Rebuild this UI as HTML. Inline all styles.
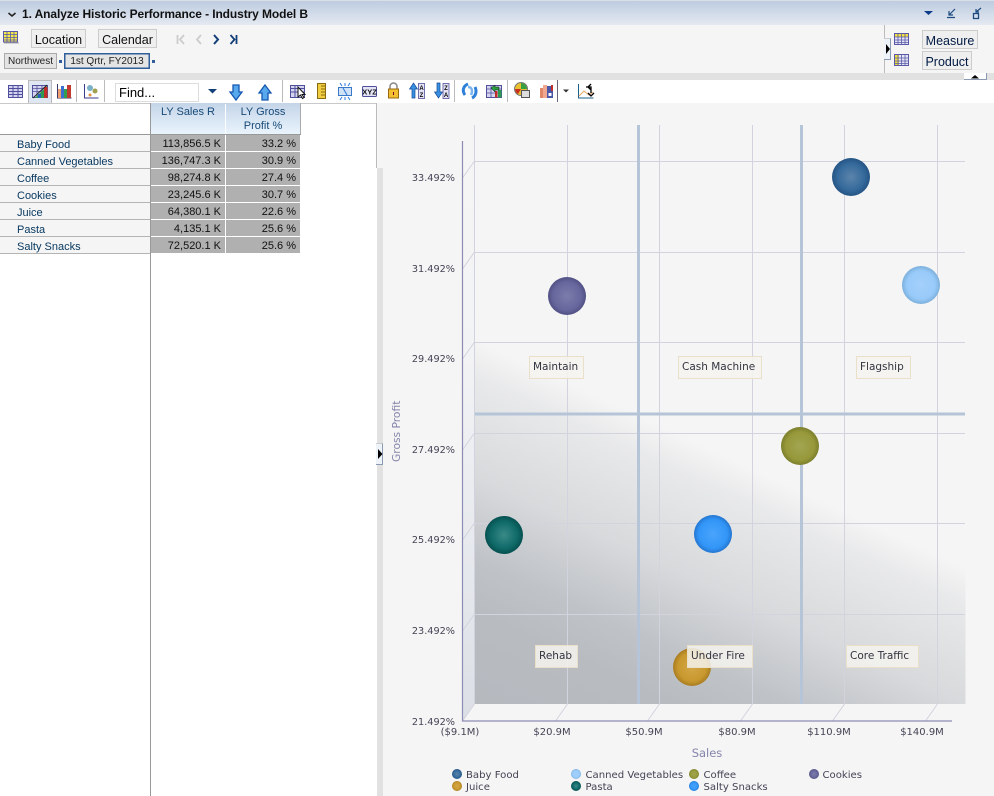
<!DOCTYPE html>
<html><head><meta charset="utf-8">
<style>
html,body{margin:0;padding:0;background:#fff}
#p{position:relative;width:994px;height:796px;overflow:hidden;background:#fff;font-family:"Liberation Sans",sans-serif;font-size:12px;color:#000}
#p div{position:absolute;box-sizing:border-box}
.btn{background:#efefef;border:1px solid #ccc;font-size:12.5px;line-height:20px;height:19px;text-align:center;color:#111}
.crumb{font-size:10px;height:16px;line-height:15px;text-align:center;background:#e4e4e4;color:#222}
.rh{left:0;width:150px;height:17px;background:#f5f5f5;border-bottom:1px solid #b4b4b4;font-size:11px;line-height:20px;padding-left:17px;color:#0a3a62}
.v{height:16px;background:#b0b0b0;font-size:11px;line-height:18px;text-align:right;padding-right:4px;color:#111}
.h{top:103px;height:31px;background:linear-gradient(#c4d4e8,#e9f3fc);font-size:11px;text-align:center;color:#174a78;line-height:14px;padding-top:2px}
svg{position:absolute;overflow:visible}
</style></head><body><div id="p">

<div style="left:0;top:0;width:994px;height:25px;background:linear-gradient(#bccbdf,#e4e9f1)"></div>
<div style="left:0;top:0;width:994px;height:1px;background:#d8dfe9"></div>
<div style="left:22px;top:7px;font-weight:bold;font-size:12px;line-height:15px;letter-spacing:-.1px;color:#111;white-space:nowrap">1. Analyze Historic Performance - Industry Model B</div>
<svg style="left:0;top:0" width="994" height="25"><path d="M8.500 13l3.500 3 3.500-3" fill="none" stroke="#222" stroke-width="1.600"/><path d="M924 11h9l-4.500 4z" fill="#0d3c8a"/><path d="M955 9l-6 6M949 11v4h4M947 17.500h8" fill="none" stroke="#1d4a80" stroke-width="1.200"/><path d="M981 8l-5 4M976 9v3h3" fill="none" stroke="#1d4a80" stroke-width="1.200"/><rect x="973.500" y="13.500" width="5" height="5" fill="none" stroke="#1d4a80" stroke-width="1.300"/></svg>

<div style="left:0;top:25px;width:994px;height:48px;background:#f5f5f5"></div>
<div style="left:0;top:73px;width:994px;height:7px;background:#e1e1e1"></div>
<svg style="left:3px;top:31px" width="16" height="14"><rect x=".5" y=".5" width="14" height="10.500" fill="#f4e94a" stroke="#5a5aa8"/><path d="M.5 3.500h14M.5 6.500h14M.5 9h14M4 .5v11M7.500 .5v11M11 .5v11" stroke="#5a5aa8" stroke-width=".8"/><path d="M1 12h15" stroke="#aaa"/></svg>
<div class="btn" style="left:31px;top:29px;width:55px">Location</div>
<div class="btn" style="left:98px;top:29px;width:59px">Calendar</div>
<svg style="left:170px;top:30px" width="75" height="20"><path d="M7.500 5v9M14 5l-4 4.500 4 4.500" fill="none" stroke="#ccc" stroke-width="1.800"/><path d="M31 5l-4 4.500 4 4.500" fill="none" stroke="#ccc" stroke-width="1.800"/><path d="M44 5l4 4.500-4 4.500" fill="none" stroke="#123f78" stroke-width="2"/><path d="M60.500 5l4 4.500-4 4.500M66.500 5v9" fill="none" stroke="#123f78" stroke-width="1.800"/></svg>
<div class="crumb" style="left:4px;top:53px;width:53px;border:1px solid #aaa">Northwest</div>
<div style="left:59px;top:60px;width:3px;height:3px;background:#2f5e9a"></div>
<div class="crumb" style="left:64px;top:53px;width:86px;height:16px;border:1px solid #2f5e9a;box-shadow:inset 0 0 0 .5px #2f5e9a">1st Qrtr, FY2013</div>
<div style="left:152px;top:60px;width:3px;height:3px;background:#2f5e9a"></div>

<div style="left:884px;top:25px;width:1px;height:48px;background:#bbb"></div>
<div style="left:884px;top:38px;width:7px;height:22px;background:#eef3fa;border-right:1px solid #8a9ab0;border-bottom:1px solid #8a9ab0;border-top:1px solid #ccc"></div>
<svg style="left:886px;top:44px" width="6" height="10"><path d="M0 0l4 5-4 5z" fill="#000"/></svg>
<svg style="left:894px;top:33px" width="17" height="14"><rect x=".5" y=".5" width="14" height="11" fill="#e4e4f6" stroke="#5a5aa8"/><rect x="1" y="1" width="13" height="3" fill="#f0e040"/><path d="M.5 4h14M.5 7h14M.5 9.500h14M4 .5v11M7.500 .5v11M11 .5v11" stroke="#5a5aa8" stroke-width=".8"/></svg>
<svg style="left:894px;top:54px" width="17" height="14"><rect x=".5" y=".5" width="14" height="11" fill="#e4e4f6" stroke="#5a5aa8"/><rect x="1" y="1" width="4" height="10" fill="#f0e040"/><path d="M.5 4h14M.5 7h14M.5 9.500h14M4 .5v11M7.500 .5v11M11 .5v11" stroke="#5a5aa8" stroke-width=".8"/></svg>
<div class="btn" style="left:922px;top:30px;width:56px;color:#001a44">Measure</div>
<div class="btn" style="left:922px;top:51px;width:50px;color:#001a44">Product</div>
<div style="left:964px;top:73px;width:23px;height:7px;background:#fff;border-right:1px solid #8a9ab0;border-bottom:1px solid #8a9ab0"></div>
<svg style="left:971px;top:75px" width="10" height="4"><path d="M0 3.500h8L4 0z" fill="#000"/></svg>

<div style="left:0;top:80px;width:994px;height:23px;background:#fff"></div>
<div style="left:28px;top:80px;width:24px;height:23px;background:#dfe8f2;border-left:1px solid #bbb;border-right:1px solid #bbb;border-top:1px solid #bbb"></div>

<svg style="left:0;top:80px" width="640" height="23">
<g stroke="#bbb" fill="none"><path d="M76.500 0v22M104.500 0v22M282.500 0v22M454.500 0v22M507.500 0v22"/><path d="M557.500 0v22" stroke="#667"/></g>
<rect x="8.500" y="5.500" width="14" height="12" fill="#d4d4f0" stroke="#4f4f9c"/><path d="M8.500 8.500h14M8.500 11.500h14M8.500 14.500h14M13 5.500v12M18 5.500v12" stroke="#4f4f9c"/>
<rect x="32.500" y="5.500" width="15" height="12" fill="#d4d4f0" stroke="#4f4f9c"/><path d="M32.500 8.500h15M32.500 11.500h15M37 5.500v12M42 5.500v12" stroke="#4f4f9c" stroke-width=".8"/><path d="M35 18L47 6v12z" fill="#2c9a52"/><path d="M44 7h3.500v11H44z" fill="#c03028"/><path d="M38 14h3v4h-3z" fill="#2a5fc0"/><path d="M33 18L47 5" stroke="#222"/>
<path d="M57.500 4v14h14" fill="none" stroke="#3a3a6a"/><rect x="58" y="9" width="3" height="9" fill="#f0a070"/><rect x="61" y="6" width="3" height="12" fill="#3a70d0"/><rect x="64" y="9" width="3" height="9" fill="#33a050"/><rect x="67" y="5" width="4" height="13" fill="#c03a30"/>
<path d="M84.500 4v14h14" fill="none" stroke="#3a3a8a"/><circle cx="90" cy="8" r="3" fill="#7ab0c8"/><circle cx="95" cy="11" r="2.500" fill="#a0a050"/><circle cx="90" cy="15" r="1.500" fill="#e09040"/>
<path d="M208 9h9l-4.500 4.500z" fill="#123f78"/>
<path d="M233 5h6v7h3l-6 8-6-8h3z" fill="#58a8ee" stroke="#1458b0" stroke-width="1.300"/>
<path d="M265 5l6 8h-3v7h-6v-7h-3z" fill="#58a8ee" stroke="#1458b0" stroke-width="1.300"/>
<rect x="290.500" y="5.500" width="14" height="12" fill="#d4d4f0" stroke="#4f4f9c"/><path d="M290.500 8.500h14M290.500 12h14M295 5.500v12" stroke="#4f4f9c"/><path d="M298 7v10l2.500-2 2 3.500 1.500-1-2-3h3z" fill="#fff" stroke="#111"/>
<rect x="317.500" y="3.500" width="8" height="15" fill="#f0cc40" stroke="#8a6a10"/><path d="M321 6h4M321 9h4M321 12h4M321 15h4" stroke="#8a6a10"/>
<rect x="338.500" y="7.500" width="13" height="8" fill="#cfe2f8" stroke="#3a78c8"/><path d="M345 3v3M345 17v3M340 3l2 3M350 3l-2 3M340 20l2-3M350 20l-2-3M343 8l4 7" stroke="#2a78d8"/>
<rect x="362.500" y="6.500" width="14" height="10" rx="1" fill="#e4e4f6" stroke="#4f4f9c"/>
<text x="369.500" y="14.500" font-family="Liberation Sans" font-size="7.500" font-weight="bold" text-anchor="middle" fill="#111">XYZ</text>
<path d="M390 9V6.500a3.500 3.500 0 0 1 7 0V9" fill="none" stroke="#888" stroke-width="1.500"/><rect x="388.500" y="9" width="10" height="9" fill="#f2c030" stroke="#9a6a10"/><path d="M393.500 12v3" stroke="#703"/>
<path d="M412 18V9h-2.500l4-6 4 6H415v9z" fill="#3a90e0" stroke="#134a98" stroke-width=".7"/><rect x="418.500" y="3.500" width="6" height="15" fill="#e4e4f6" stroke="#4f4f9c" stroke-width=".8"/><text x="421.500" y="10" font-size="6" font-weight="bold" text-anchor="middle" font-family="Liberation Sans">A</text><text x="421.500" y="17" font-size="6" font-weight="bold" text-anchor="middle" font-family="Liberation Sans">Z</text>
<path d="M437 3v9h-2.500l4 6 4-6H440V3z" fill="#3a90e0" stroke="#134a98" stroke-width=".7"/><rect x="443" y="3.500" width="6" height="15" fill="#e4e4f6" stroke="#4f4f9c" stroke-width=".8"/><text x="446" y="10" font-size="6" font-weight="bold" text-anchor="middle" font-family="Liberation Sans">Z</text><text x="446" y="17" font-size="6" font-weight="bold" text-anchor="middle" font-family="Liberation Sans">A</text>
<path d="M465 15c-3-4-2-9 3-11M475 7c2 4 1 9-3 11" fill="none" stroke="#2f80d8" stroke-width="3"/><path d="M468 7c4 0 5 4 3 8" fill="none" stroke="#7ab4ec" stroke-width="2.500"/>
<rect x="486.500" y="5.500" width="15" height="12" fill="#d4d4f0" stroke="#4f4f9c"/><path d="M486.500 9h15M486.500 13h15M491 5.500v12" stroke="#4f4f9c" stroke-width=".8"/><rect x="495" y="11" width="2.500" height="6.500" fill="#c03028"/><rect x="498" y="10" width="3.500" height="7.500" fill="#2c9a52"/><path d="M491 8l4-3v2h4v3h-4v2z" fill="#28a040" stroke="#111" stroke-width=".5"/>
<circle cx="521" cy="9" r="6.500" fill="#e8c030" stroke="#777"/><path d="M521 9V3a6 6 0 0 1 6 6z" fill="#38a040"/><path d="M521 9h-6a6 6 0 0 0 3 5z" fill="#c83020"/><rect x="521.500" y="10.500" width="8" height="7" fill="#ddd" stroke="#555"/>
<rect x="540" y="8" width="3" height="10" fill="#e08868"/><rect x="543" y="5" width="4" height="13" fill="#f0a890"/><rect x="547" y="6" width="6" height="12" fill="#4a56a8"/><rect x="551" y="5" width="2" height="6" fill="#c03028"/><rect x="548.500" y="13" width="3" height="3" fill="#fff"/>
<path d="M563 9.500h6l-3 3z" fill="#333"/>
<path d="M578.500 4v14h15" fill="none" stroke="#1d5f88"/><path d="M579 16l5-5 5 4 4-3" fill="none" stroke="#e8a860"/><path d="M586 7h5v6M591 4l-3 3 3 3M588 13l3 3 3-3" fill="none" stroke="#000" stroke-width="1.300"/>
</svg>
<div style="left:115px;top:83px;width:84px;height:19px;background:#fff;border:1px solid #ddd;font-size:13px;line-height:18px;padding-left:3px">Find...</div>

<div style="left:0;top:103px;width:377px;height:693px;background:#fff"></div>
<div style="left:0;top:103px;width:377px;height:1px;background:#c9c9c9"></div>
<div style="left:376px;top:103px;width:1px;height:65px;background:#bbb"></div>
<div class="h" style="left:151px;width:74px">LY Sales R</div>
<div class="h" style="left:226px;width:74px">LY Gross<br>Profit %</div>
<div style="left:300px;top:103px;width:1px;height:31px;background:#aaa"></div>
<div style="left:0;top:134px;width:301px;height:1px;background:#999"></div>
<div style="left:150px;top:103px;width:1px;height:693px;background:#999"></div>

<div class="rh" style="top:135px">Baby Food</div>
<div class="rh" style="top:152px">Canned Vegetables</div>
<div class="rh" style="top:169px">Coffee</div>
<div class="rh" style="top:186px">Cookies</div>
<div class="rh" style="top:203px">Juice</div>
<div class="rh" style="top:220px">Pasta</div>
<div class="rh" style="top:237px">Salty Snacks</div>

<div class="v" style="left:151px;top:135px;width:74px">113,856.5 K</div><div class="v" style="left:226px;top:135px;width:74px">33.2 %</div>
<div class="v" style="left:151px;top:152px;width:74px">136,747.3 K</div><div class="v" style="left:226px;top:152px;width:74px">30.9 %</div>
<div class="v" style="left:151px;top:169px;width:74px">98,274.8 K</div><div class="v" style="left:226px;top:169px;width:74px">27.4 %</div>
<div class="v" style="left:151px;top:186px;width:74px">23,245.6 K</div><div class="v" style="left:226px;top:186px;width:74px">30.7 %</div>
<div class="v" style="left:151px;top:203px;width:74px">64,380.1 K</div><div class="v" style="left:226px;top:203px;width:74px">22.6 %</div>
<div class="v" style="left:151px;top:220px;width:74px">4,135.1 K</div><div class="v" style="left:226px;top:220px;width:74px">25.6 %</div>
<div class="v" style="left:151px;top:237px;width:74px">72,520.1 K</div><div class="v" style="left:226px;top:237px;width:74px">25.6 %</div>

<div style="left:377px;top:103px;width:617px;height:693px;background:#f5f5f5"></div>
<div style="left:377px;top:168px;width:6px;height:628px;background:#e1e1e1"></div>
<div style="left:376px;top:443px;width:7px;height:22px;background:#eef3fa;border-right:1px solid #8a9ab0;border-bottom:1px solid #8a9ab0;border-top:1px solid #ccc"></div>
<svg style="left:378px;top:449px" width="6" height="10"><path d="M0 0l4.500 5L0 10z" fill="#000"/></svg>

<svg style="left:0;top:0" width="994" height="796" font-family="DejaVu Sans, sans-serif" font-size="10.500">
<defs>
<linearGradient id="bg" gradientUnits="userSpaceOnUse" x1="720" y1="454" x2="581" y2="753">
<stop offset="0" stop-color="#b6babf" stop-opacity="0"/><stop offset=".1" stop-color="#b6babf" stop-opacity=".2"/><stop offset=".376" stop-color="#b6babf" stop-opacity=".47"/><stop offset=".6" stop-color="#b6babf" stop-opacity=".85"/><stop offset=".75" stop-color="#b6babf" stop-opacity=".97"/><stop offset="1" stop-color="#b6babf"/>
</linearGradient>
<linearGradient id="wall" x1="0" y1="0" x2="0" y2="1"><stop offset="0" stop-color="#f5f5f5"/><stop offset=".35" stop-color="#f2f3f5"/><stop offset="1" stop-color="#dce0e6"/></linearGradient>
<radialGradient id="b1"><stop offset="0" stop-color="#5c84aa"/><stop offset=".7" stop-color="#356a9c"/><stop offset="1" stop-color="#245484"/></radialGradient>
<radialGradient id="b2"><stop offset="0" stop-color="#a4d0fc"/><stop offset=".75" stop-color="#98caf9"/><stop offset="1" stop-color="#7dafdc"/></radialGradient>
<radialGradient id="b3"><stop offset="0" stop-color="#a3a552"/><stop offset=".75" stop-color="#96983a"/><stop offset="1" stop-color="#7c7e2c"/></radialGradient>
<radialGradient id="b4"><stop offset="0" stop-color="#7c7cac"/><stop offset=".75" stop-color="#66669c"/><stop offset="1" stop-color="#505084"/></radialGradient>
<radialGradient id="b5"><stop offset="0" stop-color="#d4a748"/><stop offset=".75" stop-color="#c8982e"/><stop offset="1" stop-color="#a87c20"/></radialGradient>
<radialGradient id="b6"><stop offset="0" stop-color="#3a8a88"/><stop offset=".7" stop-color="#0f6a68"/><stop offset="1" stop-color="#065050"/></radialGradient>
<radialGradient id="b7"><stop offset="0" stop-color="#4aa4fc"/><stop offset=".75" stop-color="#3296f8"/><stop offset="1" stop-color="#2476d0"/></radialGradient>
</defs>

<rect x="474.500" y="161" width="491" height="543" fill="url(#bg)"/>
<path d="M462.500 178L474.500 161V704L462.500 721Z" fill="url(#wall)"/>

<g stroke="#d2d3de" stroke-width="1" fill="none">
<path d="M474.500 161.500H965M474.500 252.500H965M474.500 342.500H965M474.500 433.500H965M474.500 523.500H965M474.500 614.500H965"/>
<path d="M474.500 125V704M567.500 125V704M659.500 125V704M752.500 125V704M844.500 125V704M937.500 125V704"/>
<path d="M474.500 161L462.500 178M474.500 252L462.500 269M474.500 342L462.500 359M474.500 433L462.500 450M474.500 523L462.500 540M474.500 614L462.500 631M474.500 704L462.500 721M567.500 704L555.500 721M659.500 704L647.500 721M752.500 704L740.500 721M844.500 704L832.500 721M937.500 704L925.500 721"/>
</g>
<path d="M638.500 125V704M801.500 125V704" stroke="#b6c4d8" stroke-width="3"/>
<path d="M475 414H965" stroke="#b6c4d8" stroke-width="3"/>
<path d="M462.500 141V721H952" fill="none" stroke="#8c8cb4" stroke-width="1.200"/>

<circle cx="851" cy="177" r="19" fill="url(#b1)"/>
<circle cx="921" cy="285" r="19" fill="url(#b2)"/>
<circle cx="800" cy="446" r="19" fill="url(#b3)"/>
<circle cx="567" cy="296" r="19" fill="url(#b4)"/>
<circle cx="692" cy="667" r="19" fill="url(#b5)"/>
<circle cx="504" cy="535" r="19" fill="url(#b6)"/>
<circle cx="713" cy="534" r="19" fill="url(#b7)"/>

<g fill="#f5f3ee" fill-opacity=".85" stroke="#eadfc8">
<rect x="529.500" y="356.500" width="54" height="22"/>
<rect x="678.500" y="356.500" width="83" height="22"/>
<rect x="856.500" y="356.500" width="54" height="22"/>
<rect x="535.500" y="645.500" width="42" height="22"/>
<rect x="687.500" y="645.500" width="65" height="22"/>
<rect x="846.500" y="645.500" width="72" height="22"/>
</g>
<g fill="#333340">
<text x="533" y="370">Maintain</text>
<text x="682" y="370">Cash Machine</text>
<text x="860" y="370">Flagship</text>
<text x="539" y="659">Rehab</text>
<text x="691" y="659">Under Fire</text>
<text x="850" y="659">Core Traffic</text>
</g>
<g fill="#444455" text-anchor="end" font-size="9.700">
<text x="455" y="181">33.492%</text>
<text x="455" y="272">31.492%</text>
<text x="455" y="362">29.492%</text>
<text x="455" y="453">27.492%</text>
<text x="455" y="543">25.492%</text>
<text x="455" y="634">23.492%</text>
<text x="455" y="725">21.492%</text>
</g>
<g fill="#444455" text-anchor="middle" font-size="10">
<text x="460" y="735">($9.1M)</text>
<text x="552" y="735">$20.9M</text>
<text x="644" y="735">$50.9M</text>
<text x="737" y="735">$80.9M</text>
<text x="829" y="735">$110.9M</text>
<text x="922" y="735">$140.9M</text>
</g>
<text x="707" y="757" text-anchor="middle" font-size="11.500" fill="#8585ab">Sales</text>
<text transform="translate(400 462) rotate(-90)" font-size="10.700" fill="#8585ab">Gross Profit</text>

<circle cx="457" cy="774" r="5" fill="url(#b1)"/>
<circle cx="576" cy="774" r="5" fill="url(#b2)"/>
<circle cx="694" cy="774" r="5" fill="url(#b3)"/>
<circle cx="814" cy="774" r="5" fill="url(#b4)"/>
<circle cx="457" cy="786" r="5" fill="url(#b5)"/>
<circle cx="576" cy="786" r="5" fill="url(#b6)"/>
<circle cx="694" cy="786" r="5" fill="url(#b7)"/>
<g fill="#444455" font-size="10.100">
<text x="466" y="778">Baby Food</text>
<text x="585.500" y="778">Canned Vegetables</text>
<text x="703.500" y="778">Coffee</text>
<text x="822.500" y="778">Cookies</text>
<text x="466" y="790">Juice</text>
<text x="585.500" y="790">Pasta</text>
<text x="703.500" y="790">Salty Snacks</text>
</g>
</svg>
</div></body></html>
